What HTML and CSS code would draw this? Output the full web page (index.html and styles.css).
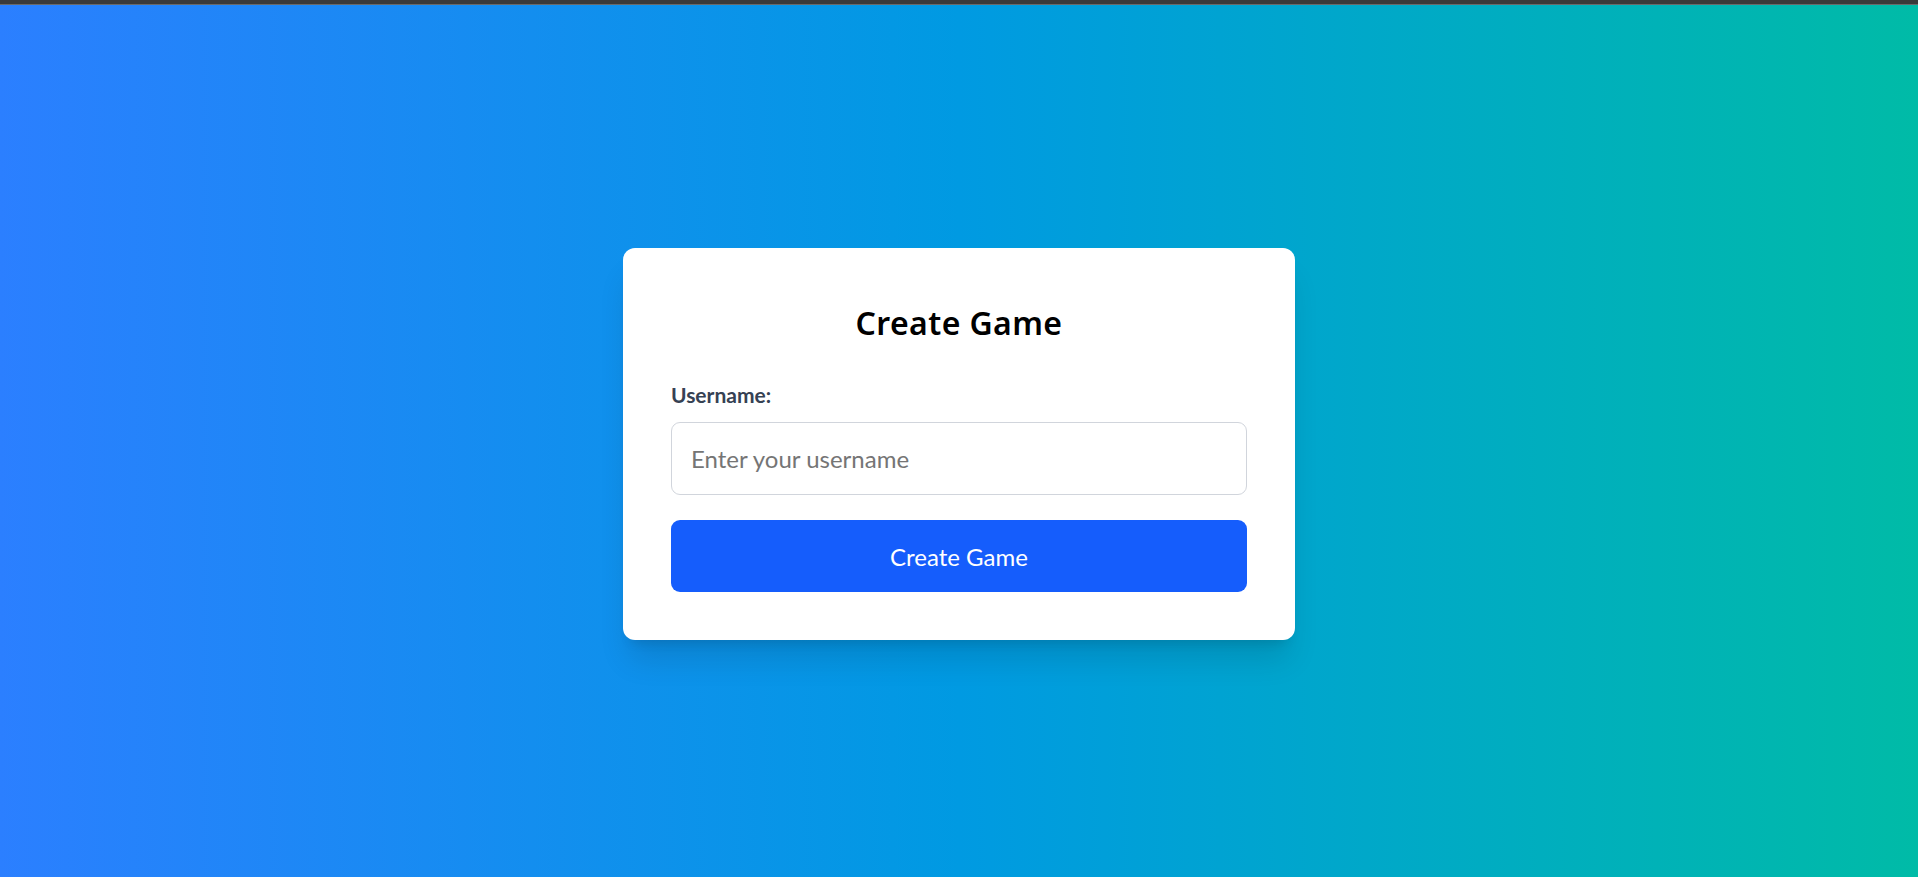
FILE: index.html
```html
<!DOCTYPE html>
<html lang="en">
<head>
<meta charset="utf-8">
<title>Create Game</title>
<link rel="stylesheet" href="styles.css">
</head>
<body>
<div class="chrome"></div>
<main class="page">
  <section class="card">
    <h1 class="title">Create Game</h1>
    <form class="form">
      <label class="label" for="username">Username:</label>
      <input class="input" id="username" type="text" placeholder="Enter your username">
      <button class="button" type="button">Create Game</button>
    </form>
  </section>
</main>
</body>
</html>
```

FILE: styles.css
```css
* { box-sizing: border-box; }
html, body { margin: 0; padding: 0; height: 100%; }
body {
  font-family: Lato, "Noto Sans", sans-serif;
  background: #2b7fff;
  overflow: hidden;
}
.chrome {
  height: 5px;
  background: #3a3a3a;
  border-bottom: 1px solid #6a6a6a;
}
.page {
  height: calc(100vh - 5px);
  padding-top: 6px;
  display: flex;
  align-items: center;
  justify-content: center;
  background: linear-gradient(to right, #2b7fff, #009ae2 50%, #00bba7);
}
.card {
  width: 672px;
  background: #ffffff;
  border-radius: 12px;
  padding: 48px;
  box-shadow: 0 25px 31px -6px rgba(0,0,0,0.12), 0 10px 12px -8px rgba(0,0,0,0.12);
}
.title {
  margin: 0 0 30px;
  font-family: "Noto Sans", Lato, sans-serif;
  font-size: 32px;
  line-height: 54px;
  font-weight: 600;
  letter-spacing: 0.4px;
  text-align: center;
  color: #000;
}
.form {
  display: flex;
  flex-direction: column;
}
.label {
  font-size: 21px;
  line-height: 30px;
  font-weight: 700;
  color: #364153;
  margin-bottom: 12px;
}
.input {
  height: 73px;
  border: 1px solid #d1d5dc;
  border-radius: 9px;
  padding: 0 19px;
  font-family: inherit;
  font-size: 24px;
  color: #111;
  outline: none;
  margin-bottom: 25px;
}
.input::placeholder { color: #757575; }
.button {
  height: 72px;
  border: 0;
  border-radius: 9px;
  background: #155dfc;
  color: #fff;
  font-family: inherit;
  font-size: 24px;
  cursor: pointer;
}
```
